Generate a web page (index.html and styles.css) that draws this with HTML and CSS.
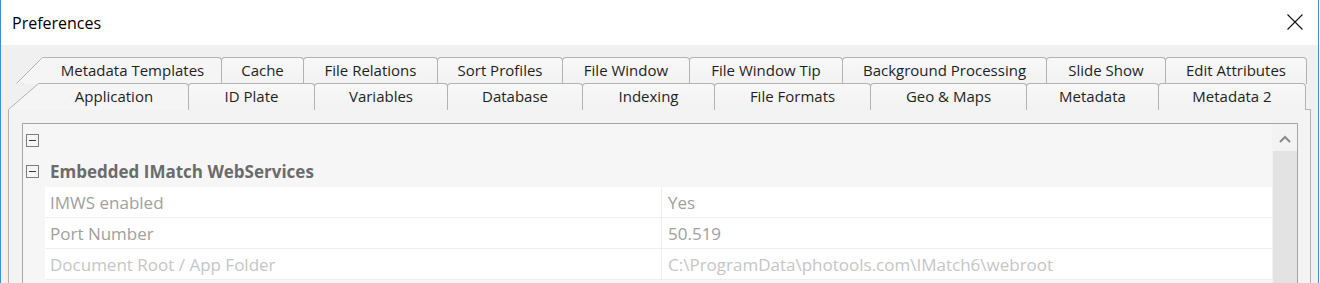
FILE: index.html
```html
<!DOCTYPE html>
<html>
<head>
<meta charset="utf-8">
<link rel="stylesheet" href="styles.css">
</head>
<body>
<div class="window">
  <div class="titlebar">
    <span class="title">Preferences</span>
    <svg class="close" width="16" height="16" viewBox="0 0 16 16"><path d="M0.5 0.5 L15.5 15.5 M15.5 0.5 L0.5 15.5" stroke="#111" stroke-width="1.1" fill="none"/></svg>
  </div>
  <div class="content">
    <div class="tabrow back">
      <svg class="slant" width="28" height="27" viewBox="0 0 28 27"><polygon points="0,27 27,0.5 28,0.5 28,27" fill="#f5f5f5"/><path d="M0.5 26.5 L26.5 0.5 L28 0.5" stroke="#b3b3b3" stroke-width="1" fill="none"/></svg>
      <div class="tab first">Metadata Templates</div>
      <div class="tab">Cache</div>
      <div class="tab">File Relations</div>
      <div class="tab">Sort Profiles</div>
      <div class="tab">File Window</div>
      <div class="tab">File Window Tip</div>
      <div class="tab">Background Processing</div>
      <div class="tab">Slide Show</div>
      <div class="tab">Edit Attributes</div>
    </div>
    <div class="tabrow front">
      <svg class="slant" width="32" height="27" viewBox="0 0 32 27"><polygon points="0,27 31,0.5 32,0.5 32,27" fill="#f5f5f5"/><path d="M0.5 26.5 L30.5 0.5 L32 0.5" stroke="#b3b3b3" stroke-width="1" fill="none"/></svg>
      <div class="tab first">Application</div>
      <div class="tab">ID Plate</div>
      <div class="tab">Variables</div>
      <div class="tab">Database</div>
      <div class="tab">Indexing</div>
      <div class="tab">File Formats</div>
      <div class="tab">Geo &amp; Maps</div>
      <div class="tab">Metadata</div>
      <div class="tab">Metadata 2</div>
    </div>
    <div class="panel">
      <div class="grid">
        <div class="rows">
          <div class="cat"><span class="toggle"></span><span class="cat-label"></span></div>
          <div class="cat"><span class="toggle"></span><span class="cat-label">Embedded IMatch WebServices</span></div>
          <div class="prop">
            <div class="indent"></div>
            <div class="name">IMWS enabled</div>
            <div class="value">Yes</div>
          </div>
          <div class="prop">
            <div class="indent"></div>
            <div class="name">Port Number</div>
            <div class="value">50.519</div>
          </div>
          <div class="prop disabled">
            <div class="indent"></div>
            <div class="name">Document Root / App Folder</div>
            <div class="value">C:\ProgramData\photools.com\IMatch6\webroot</div>
          </div>
        </div>
        <div class="scrollbar">
          <svg class="arrow" width="12" height="8" viewBox="0 0 12 8"><path d="M1 7 L6 2 L11 7" stroke="#8a8a8a" stroke-width="2" fill="none"/></svg>
          <div class="thumb"></div>
        </div>
      </div>
    </div>
  </div>
</div>
</body>
</html>
```

FILE: styles.css
```css
* { box-sizing: border-box; }
html, body { margin: 0; padding: 0; background: #fff; }
body {
  width: 1320px;
  height: 283px;
  overflow: hidden;
  font-family: "Open Sans", "Noto Sans", sans-serif;
  font-size: 16px;
}
.window {
  width: 1319px;
  height: 283px;
  border-left: 1px solid #3d8ee0;
  border-right: 1px solid #3d8ee0;
  display: flex;
  flex-direction: column;
  overflow: hidden;
}
.titlebar {
  height: 45px;
  flex: none;
  background: #fff;
  display: flex;
  align-items: center;
  padding-left: 11px;
  padding-right: 15px;
}
.title {
  flex: 1;
  color: #000;
  font-size: 16px;
}
.close { flex: none; margin-top: -1px; }
.content {
  flex: 1;
  background: #f0f0f0;
  padding-top: 12px;
}
.tabrow {
  display: grid;
  height: 26px;
  color: #1f1f1f;
  font-size: 15px;
}
.tabrow.back {
  padding-left: 15px;
  grid-template-columns: 28px 177px 82px 134px 125px 127px 153px 204px 119px 141px;
}
.tabrow.front {
  padding-left: 7px;
  grid-template-columns: 32px 148px 126px 133px 135px 132px 156px 156px 132px 147px;
}
.slant { display: block; }
.tab {
  margin-right: -1px;
  height: 27px;
  border: 1px solid #b3b3b3;
  border-bottom: none;
  border-radius: 4px 4px 0 0;
  background: linear-gradient(#f8f8f8, #f2f2f2);
  display: flex;
  justify-content: center;
  align-items: center;
  padding-bottom: 3px;
  white-space: nowrap;
}
.tab.first {
  border-left: none;
  border-top-left-radius: 0;
  background: #f5f5f5;
}
.panel {
  margin-left: 7px;
  width: 1303px;
  height: 200px;
  border: 1px solid #b3b3b3;
  background: #f3f3f3;
  padding: 13px 12px 0 13px;
}
.grid {
  display: flex;
  border: 1px solid #a6a6a6;
  border-bottom: none;
  height: 180px;
  background: #f7f7f7;
}
.rows { flex: 1; padding-top: 1px; font-size: 17px; }
.cat {
  height: 31px;
  display: flex;
  align-items: center;
  background: #f6f6f6;
}
.toggle {
  width: 13px;
  height: 13px;
  margin-left: 3px;
  border: 1px solid #7c7c7c;
  position: relative;
  flex: none;
}
.toggle::after {
  content: "";
  position: absolute;
  left: 2px;
  right: 2px;
  top: 5px;
  height: 1px;
  background: #3a3a3a;
}
.cat-label {
  margin-left: 11px;
  font-weight: 700;
  color: #6b6b6b;
}
.prop {
  height: 31px;
  display: flex;
}
.indent { width: 22px; flex: none; background: #f6f6f6; }
.name, .value {
  background: #fff;
  border-bottom: 1px solid #eeeeee;
  display: flex;
  align-items: center;
  color: #a0a0a0;
  white-space: nowrap;
}
.name {
  width: 617px;
  flex: none;
  padding-left: 5px;
  border-right: 1px solid #eeeeee;
}
.value { flex: 1; padding-left: 6px; }
.prop.disabled .name, .prop.disabled .value { color: #c6c6c6; }
.scrollbar {
  width: 25px;
  flex: none;
  background: #f3f3f3;
  display: flex;
  flex-direction: column;
  align-items: center;
}
.arrow { margin-top: 11px; }
.thumb {
  margin-top: 8px;
  width: 24px;
  flex: 1;
  background: #e3e3e3;
}
```
